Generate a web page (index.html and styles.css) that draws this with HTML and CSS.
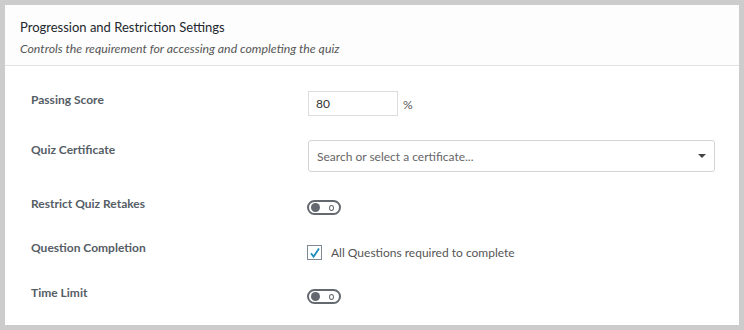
FILE: index.html
```html
<!DOCTYPE html>
<html lang="en">
<head>
  <meta charset="UTF-8">
  <title>Progression and Restriction Settings</title>
  <link rel="stylesheet" href="styles.css">
</head>
<body>
  <div class="panel">
    <div class="panel-header">
      <h2>Progression and Restriction Settings</h2>
      <p>Controls the requirement for accessing and completing the quiz</p>
    </div>

    <div class="panel-body">
      <div class="row row-score">
        <label class="row-label" for="score">Passing Score</label>
        <div class="row-field">
          <input id="score" class="score-input" type="text" value="80">
          <span class="unit">%</span>
        </div>
      </div>

      <div class="row row-cert">
        <label class="row-label">Quiz Certificate</label>
        <div class="row-field">
          <div class="select">
            <span class="placeholder">Search or select a certificate...</span>
            <span class="caret"></span>
          </div>
        </div>
      </div>

      <div class="row row-retakes">
        <label class="row-label">Restrict Quiz Retakes</label>
        <div class="row-field">
          <span class="toggle"><span class="knob"></span><span class="off-mark"></span></span>
        </div>
      </div>

      <div class="row row-completion">
        <label class="row-label">Question Completion</label>
        <div class="row-field">
          <span class="checkbox">
            <svg width="12" height="12" viewBox="0 0 12 12"><path d="M2 6.3 L4.6 9.6 L10 1.6" fill="none" stroke="#1e8cbe" stroke-width="1.8"/></svg>
          </span>
          <span class="check-label">All Questions required to complete</span>
        </div>
      </div>

      <div class="row row-time">
        <label class="row-label">Time Limit</label>
        <div class="row-field">
          <span class="toggle"><span class="knob"></span><span class="off-mark"></span></span>
        </div>
      </div>
    </div>
  </div>
</body>
</html>
```

FILE: styles.css
```css
:root {
  --frame: #cccccc;
  --text-color: #23282d;
  --label-color: #555d66;
  --muted: #555;
  --border: #dddddd;
  --toggle: #646970;
  --accent: #1e8cbe;
}

* {
  box-sizing: border-box;
  margin: 0;
  padding: 0;
}

body {
  font-family: 'Lato', sans-serif;
  background: var(--frame);
  padding: 5px;
  color: var(--text-color);
  font-size: 13px;
}

.panel {
  background: #fdfdfd;
  height: 320px;
  width: 734px;
}

.panel-header {
  padding: 13px 15px 0;
  height: 61px;
  border-bottom: 1px solid #e2e2e2;
}

.panel-header h2 {
  font-size: 13px;
  font-weight: 400;
  color: #23282d;
  line-height: 18px;
}

.panel-header p {
  margin-top: 4px;
  font-size: 12.3px;
  font-style: italic;
  color: #555;
  line-height: 18px;
}

.panel-body {
  padding: 26px 0 0 26px;
  background: #fff;
  height: 259px;
}

.row {
  display: flex;
  align-items: flex-start;
}

.row-label {
  width: 277px;
  font-size: 12px;
  font-weight: 700;
  color: var(--label-color);
  line-height: 16px;
}

.row-field {
  display: flex;
  align-items: center;
}

.score-input {
  width: 90px;
  height: 25px;
  border: 1px solid var(--border);
  font-family: inherit;
  font-size: 12px;
  color: #333;
  padding: 0 7px;
  margin-top: -1px;
}

.unit {
  margin-left: 5px;
  font-size: 12px;
  color: var(--muted);
}

.row-cert { margin-top: 24px; }
.row-cert .row-label { margin-top: 2px; }

.select {
  width: 407px;
  height: 32px;
  border: 1px solid #d4d4d4;
  border-radius: 3px;
  display: flex;
  align-items: center;
  justify-content: space-between;
  padding: 0 8px;
}

.placeholder {
  font-size: 12px;
  color: #666;
}

.caret {
  width: 0;
  height: 0;
  border-left: 4px solid transparent;
  border-right: 4px solid transparent;
  border-top: 4px solid #444;
}

.row-retakes { margin-top: 24px; }

.toggle {
  width: 34px;
  height: 15px;
  border: 2px solid var(--toggle);
  border-radius: 8px;
  display: flex;
  align-items: center;
  justify-content: space-between;
  padding: 0 5px 0 2px;
  margin-left: -1px;
  margin-top: 4px;
}

.knob {
  width: 9px;
  height: 9px;
  border-radius: 50%;
  background: var(--toggle);
}

.off-mark {
  width: 5px;
  height: 6px;
  border: 1.5px solid var(--toggle);
  border-radius: 50%;
}

.row-completion { margin-top: 25px; }

.checkbox {
  width: 15px;
  height: 15px;
  border: 1px solid #7e8993;
  display: inline-flex;
  align-items: center;
  justify-content: center;
  margin-left: -1px;
  margin-top: 5px;
}

.check-label {
  margin-left: 9px;
  margin-top: 5px;
  font-size: 12px;
  color: var(--muted);
}

.row-time { margin-top: 25px; }
```
